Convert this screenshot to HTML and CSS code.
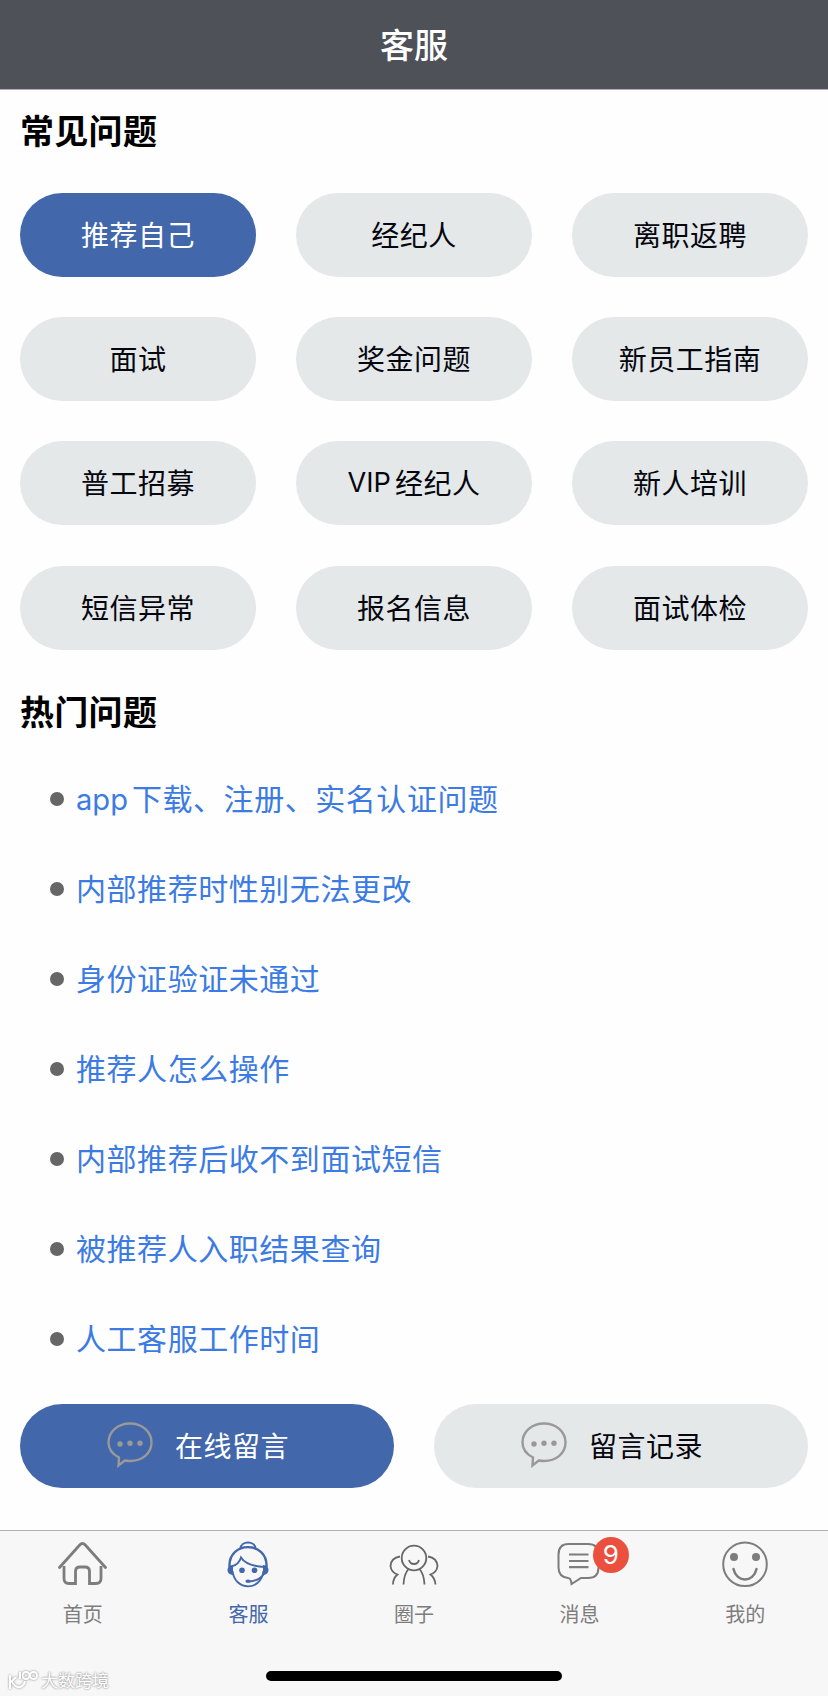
FILE: index.html
```html
<!DOCTYPE html>
<html lang="zh-CN">
<head>
	<meta charset="UTF-8">
	<meta name="viewport" content="width=device-width, initial-scale=1.0">
	<title>客服</title>
	<link rel="stylesheet" href="styles.css">
</head>
<body>
	<div class="page">
		<header class="header">
			<h1 class="header__title">客服</h1>
		</header>

		<main class="content">
			<!-- Common questions -->
			<h2 class="section__title">常见问题</h2>
			<div class="tags">
				<button class="btn btn--active">推荐自己</button>
				<button class="btn">经纪人</button>
				<button class="btn">离职返聘</button>
				<button class="btn">面试</button>
				<button class="btn">奖金问题</button>
				<button class="btn">新员工指南</button>
				<button class="btn">普工招募</button>
				<button class="btn"><span class="latin">VIP</span>经纪人</button>
				<button class="btn">新人培训</button>
				<button class="btn">短信异常</button>
				<button class="btn">报名信息</button>
				<button class="btn">面试体检</button>
			</div>

			<!-- Hot questions -->
			<h2 class="section__title section__title--hot">热门问题</h2>
			<ul class="list">
				<li class="list__item"><a href="#" class="link"><span class="latin">app</span>下载、注册、实名认证问题</a></li>
				<li class="list__item"><a href="#" class="link">内部推荐时性别无法更改</a></li>
				<li class="list__item"><a href="#" class="link">身份证验证未通过</a></li>
				<li class="list__item"><a href="#" class="link">推荐人怎么操作</a></li>
				<li class="list__item"><a href="#" class="link">内部推荐后收不到面试短信</a></li>
				<li class="list__item"><a href="#" class="link">被推荐人入职结果查询</a></li>
				<li class="list__item"><a href="#" class="link">人工客服工作时间</a></li>
			</ul>

			<div class="actions">
				<button class="btn btn--active btn--icon">
					<svg class="btn__icon" viewBox="0 0 46 46">
						<path d="M12 35.500C5 32 1.500 27 1.500 20.500C1.500 9.500 11 1.500 23 1.500S44.500 9.500 44.500 20.500S35 39 23 39C21 39 19.300 38.800 17.700 38.500L11.500 43.500Z" />
						<circle cx="13" cy="22" r="2.700" /><circle cx="23" cy="21.300" r="2.700" /><circle cx="33" cy="21.300" r="2.700" />
					</svg>
					在线留言
				</button>
				<button class="btn btn--icon">
					<svg class="btn__icon" viewBox="0 0 46 46">
						<path d="M12 35.500C5 32 1.500 27 1.500 20.500C1.500 9.500 11 1.500 23 1.500S44.500 9.500 44.500 20.500S35 39 23 39C21 39 19.300 38.800 17.700 38.500L11.500 43.500Z" />
						<circle cx="13" cy="22" r="2.700" /><circle cx="23" cy="21.300" r="2.700" /><circle cx="33" cy="21.300" r="2.700" />
					</svg>
					留言记录
				</button>
			</div>
		</main>

		<!-- Bottom tabs -->
		<nav class="tabbar">
			<a href="#" class="tab">
				<svg class="tab__icon" viewBox="0 0 50 50">
					<path stroke-width="2.800" stroke-linecap="round" d="M1.500 27.500L21.700 5Q24.500 2 27.300 5L47.500 27.500" />
					<path stroke-width="2.800" d="M6 26V38.500Q6 43.500 11 43.500H17.500V31.500Q17.500 27 22 27H27Q31.500 27 31.500 31.500V43.500H38Q43 43.500 43 38.500V26" />
				</svg>
				首页
			</a>
			<a href="#" class="tab tab--active">
				<svg class="tab__icon" viewBox="0 0 50 50">
					<path stroke-width="2" d="M17.500 8.500C18 0.500 32 0.500 32.500 8.500" />
					<path stroke-width="2.400" d="M6.500 27C5 0.500 45 0.500 43.500 27" />
					<path stroke-width="1.900" d="M9.500 31C12 51.500 38 51.500 40.500 31M8.500 26.500C14 25 17 21 18 17.500C22 24 33 26.500 42 27M42 32C39 38 33 41 26 41.500" />
					<path class="fill" d="M10 25V35Q4.500 34.500 4.500 30Q4.500 25.500 10 25ZM40 25V35Q45.500 34.500 45.500 30Q45.500 25.500 40 25Z" />
					<circle class="fill" cx="19" cy="30.300" r="2.800" /><circle class="fill" cx="31.500" cy="30.300" r="2.800" />
					<ellipse class="fill" cx="25" cy="41.300" rx="2.600" ry="1.800" />
				</svg>
				客服
			</a>
			<a href="#" class="tab">
				<svg class="tab__icon tab__icon--dark" viewBox="0 0 50 50">
					<circle cx="25" cy="18" r="12.300" stroke-width="1.800" />
					<path stroke-width="1.800" d="M20 20Q21 24 25 24T30 20M19.500 29Q15 34 14.500 44.500M30.500 29Q35 34 35.500 44.500M11 16.500Q2 18 1.500 26Q2 32 8.500 34.500Q4 38 4 44.500M39 16.500Q48 18 48.500 26Q48 32 41.500 34.500Q46 38 46.500 44.500" />
				</svg>
				圈子
			</a>
			<a href="#" class="tab">
				<svg class="tab__icon" viewBox="0 0 50 50">
					<path stroke-width="2" d="M13.500 4H33Q43.500 4 43.500 14.500V27.500Q43.500 38 33 38H26L16.500 44Q16 38 13 38Q3.500 37 3.500 27.500V14.500Q3.500 4 13.500 4Z" />
					<path stroke-width="2.200" d="M14 14.500H33.500M14 21H33.500M14 27.200H33.500" />
				</svg>
				消息
				<span class="badge">9</span>
			</a>
			<a href="#" class="tab">
				<svg class="tab__icon" viewBox="0 0 50 50">
					<circle cx="25" cy="24.300" r="21.800" stroke-width="2" />
					<path stroke-width="2.500" stroke-linecap="round" d="M13.500 29C16.500 43 33.500 43 36.500 29" />
					<circle class="fill" cx="14" cy="17" r="4" /><circle class="fill" cx="36" cy="17" r="4" />
				</svg>
				我的
			</a>
			<span class="home-bar"></span>
			<div class="watermark">
				<svg class="watermark__logo" viewBox="0 0 30 22">
					<path d="M2 6V20M3 13L8 8M4 13Q8 19 12 18T17 12" />
					<path d="M12 3V10" /><circle cx="18" cy="6.500" r="3.500" /><circle cx="25.500" cy="6.500" r="3.500" />
				</svg>
				大数跨境
			</div>
		</nav>
	</div>
</body>
</html>
```
FILE: styles.css
```css
:root {
	/* COLORS */
	--blue: #4267ab;
	--link: #3b7be3;
	--gray: #7d7d7d;
	--light: #e4e8e9;
	--dark: #4f5159;
}

* {
	box-sizing: border-box;
}

body {
	margin: 0;
	background-color: #fefefe;
	color: #000;
	font-family: "Noto Sans CJK SC", sans-serif;
}

.page {
	display: flex;
	flex-direction: column;
	height: 1696px;
}

.header {
	display: flex;
	align-items: center;
	justify-content: center;
	height: 90px;
	padding-bottom: 2px;
	background-color: var(--dark);
	border-bottom: 1px solid #b0b0b4;
}

.header__title {
	margin: 0;
	color: #fff;
	font-size: 34px;
	font-weight: 500;
	line-height: 50px;
}

.content {
	flex: 1;
	padding: 0 20px;
}

.section__title {
	margin: 15px 0 38px;
	font-size: 34px;
	font-weight: 700;
	letter-spacing: 0.3px;
	line-height: 50px;
}

.section__title--hot {
	margin: 36px 0 18px;
}

.tags {
	display: grid;
	grid-template-columns: repeat(3, 1fr);
	gap: 40.200px 40px;
}

.btn {
	display: flex;
	align-items: center;
	justify-content: center;
	height: 84px;
	padding: 0 0 2px;
	border: none;
	border-radius: 42px;
	background-color: var(--light);
	color: #06060f;
	font-family: inherit;
	font-size: 28px;
	letter-spacing: 0.5px;
	cursor: pointer;
}

.btn--active {
	background-color: var(--blue);
	color: #fff;
}

.btn--icon {
	padding-right: 18px;
}

.latin {
	margin-right: 4px;
	font-family: Inter, sans-serif;
	font-size: 0.97em;
	letter-spacing: 0;
}

.list {
	margin: 0;
	padding: 0 0 0 30px;
	list-style: none;
}

.list__item {
	display: flex;
	align-items: center;
	height: 90px;
}

.list__item::before {
	content: "";
	width: 14px;
	height: 14px;
	margin-right: 12px;
	border-radius: 50%;
	background-color: #666;
}

.link {
	margin-bottom: 4px;
	color: var(--link);
	font-size: 30px;
	letter-spacing: 0.55px;
	text-decoration: none;
}

.actions {
	display: grid;
	grid-template-columns: 1fr 1fr;
	gap: 40px;
	margin-top: 20px;
}

.btn__icon {
	width: 46px;
	height: 46px;
	margin-right: 22px;
	fill: none;
	stroke: #999;
	stroke-width: 2.400;
}

.btn__icon circle {
	fill: #999;
	stroke: none;
}

.tabbar {
	position: relative;
	display: flex;
	height: 166px;
	background-color: #f7f7f7;
	border-top: 1px solid #b0b0b0;
}

.tab {
	position: relative;
	display: flex;
	flex: 1;
	flex-direction: column;
	align-items: center;
	padding-top: 9px;
	color: var(--gray);
	font-size: 20px;
	line-height: 30px;
	text-decoration: none;
}

.tab--active {
	color: var(--blue);
}

.tab__icon {
	width: 50px;
	height: 50px;
	margin-bottom: 9px;
	fill: none;
	stroke: currentColor;
}

.tab__icon--dark {
	color: #666;
}

.tab__icon .fill {
	fill: currentColor;
	stroke: none;
}

.badge {
	position: absolute;
	top: 6px;
	left: 96px;
	width: 36px;
	height: 36px;
	border-radius: 50%;
	background-color: #eb4f3d;
	color: #fff;
	font-family: Inter, sans-serif;
	font-size: 26px;
	line-height: 36px;
	text-align: center;
}

.home-bar {
	position: absolute;
	bottom: 15px;
	left: 266px;
	width: 296px;
	height: 10px;
	border-radius: 5px;
	background-color: #000;
}

.watermark {
	position: absolute;
	bottom: 4px;
	left: 8px;
	display: flex;
	align-items: center;
	gap: 3px;
	color: #fff;
	font-size: 17px;
	line-height: 24px;
	text-shadow: 0 0 2px #999, 0 0 2px #aaa;
}

.watermark__logo {
	width: 30px;
	height: 22px;
	fill: none;
	stroke: #fff;
	stroke-width: 2;
	filter: drop-shadow(0 0 1px #888);
}
```
